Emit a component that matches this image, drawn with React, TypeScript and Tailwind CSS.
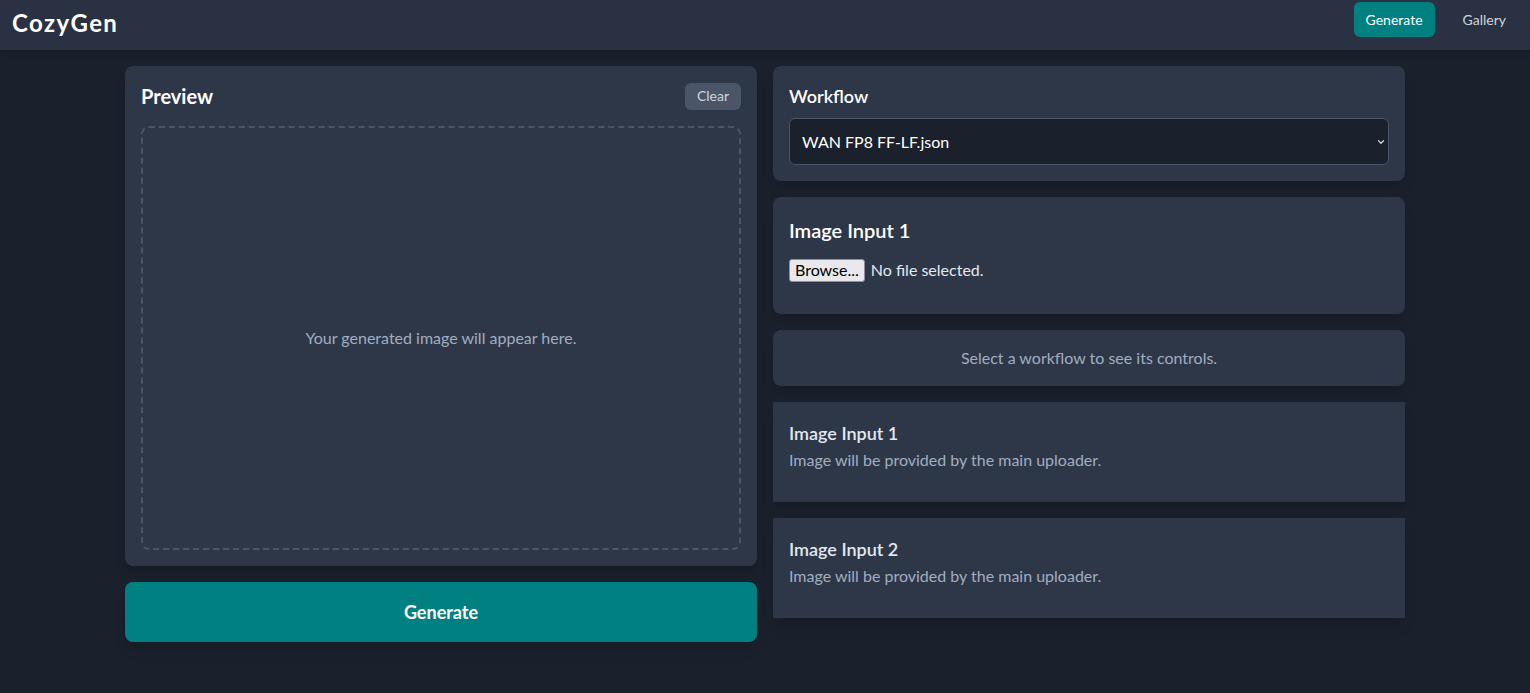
import { ChevronDown } from "lucide-react";

const font = { fontFamily: "Lato, 'Noto Sans', sans-serif" };

function Header() {
  return (
    <header className="flex h-[50px] items-start justify-between bg-[#2a3142] px-3 shadow-md">
      <div className="pt-[7px] text-2xl font-bold tracking-[1.4px] text-white">CozyGen</div>
      <nav className="flex items-center gap-4 pt-[2px]">
        <button className="h-[35px] rounded-md bg-[#008080] px-3 text-sm text-white">
          Generate
        </button>
        <button className="h-[35px] rounded-md px-3 text-sm text-gray-300">
          Gallery
        </button>
      </nav>
    </header>
  );
}

function PreviewPanel() {
  return (
    <div className="flex flex-col gap-4">
      <div className="flex h-[500px] flex-col rounded-lg bg-[#2e3748] p-4 shadow-lg">
        <div className="flex items-center justify-between">
          <h2 className="text-xl font-bold text-white">Preview</h2>
          <button className="h-[27px] rounded-md bg-[#4a5568] px-3 text-sm text-gray-300">
            Clear
          </button>
        </div>
        <div className="mt-4 flex flex-1 items-center justify-center rounded-lg border-2 border-dashed border-[#4a5568]">
          <p className="text-[#a0aec0]">Your generated image will appear here.</p>
        </div>
      </div>
      <button className="h-[60px] w-full rounded-lg bg-[#008080] text-lg font-bold text-white shadow-lg">
        Generate
      </button>
    </div>
  );
}

function StaticInput({ title }: { title: string }) {
  return (
    <div className="h-[100px] bg-[#2e3748] px-4 pt-[17px] shadow-lg">
      <h3 className="text-lg font-semibold text-[#e2e8f0]">{title}</h3>
      <p className="mt-px text-[#a0aec0]">Image will be provided by the main uploader.</p>
    </div>
  );
}

function ControlsPanel() {
  return (
    <div className="flex flex-col gap-4">
      <div className="rounded-lg bg-[#2e3748] p-4 shadow-lg">
        <label className="block text-lg font-semibold text-white">Workflow</label>
        <div className="relative mt-2">
          <select className="h-[47px] w-full appearance-none rounded-md border border-[#4a5568] bg-[#1a202c] px-3 text-base text-white outline-none">
            <option>WAN FP8 FF-LF.json</option>
          </select>
          <ChevronDown
            className="pointer-events-none absolute right-[3px] top-[19px] h-2.5 w-2.5 text-gray-300"
            strokeWidth={3}
          />
        </div>
      </div>

      <div className="h-[117px] rounded-lg bg-[#2e3748] px-4 pt-[19px] shadow-lg">
        <h3 className="text-xl font-semibold text-white">Image Input 1</h3>
        <div className="mt-[14px] flex items-center gap-[6px]">
          <span className="flex h-[23px] items-center rounded-[3px] border border-[#8f8f9d] bg-[#e9e9ed] px-[5px] text-base text-black">
            Browse...
          </span>
          <span className="text-base text-[#e2e8f0]">No file selected.</span>
        </div>
      </div>

      <div className="flex h-[56px] items-center justify-center rounded-lg bg-[#2e3748] shadow-lg">
        <p className="text-[#a0aec0]">Select a workflow to see its controls.</p>
      </div>

      <StaticInput title="Image Input 1" />
      <StaticInput title="Image Input 2" />
    </div>
  );
}

export default function App() {
  return (
    <div className="min-h-[693px] bg-[#1a202c]" style={font}>
      <Header />
      <main className="mx-auto grid max-w-7xl grid-cols-2 items-start gap-4 py-4">
        <PreviewPanel />
        <ControlsPanel />
      </main>
    </div>
  );
}
